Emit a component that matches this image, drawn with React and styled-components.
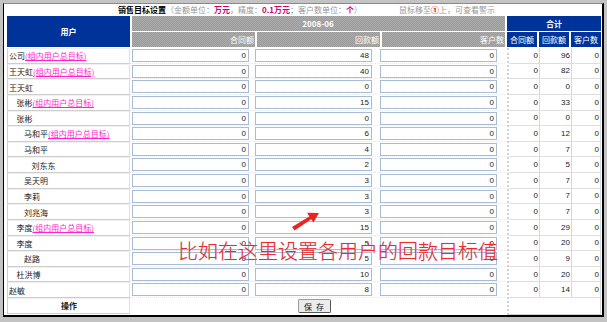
import React from 'react';
import styled, { createGlobalStyle } from 'styled-components';

const Global = createGlobalStyle`
  html, body { margin: 0; padding: 0; background: #c3c3c3; }
  body { font-family: "Noto Sans CJK SC", "Liberation Sans", sans-serif; }
  * { box-sizing: border-box; }
`;

const Frame = styled.div`
  position: relative;
  margin: 3px 0 0 3px;
  width: 601px;
  height: 314px;
  background: #fff;
  border-top: 1px solid #8a8a8a;
  border-left: 1px solid #000;
  border-right: 2px solid #000;
  border-bottom: 2px solid #000;
  overflow: hidden;
`;

const TitleBar = styled.div`
  height: 12px;
  padding-left: 114px;
  display: flex;
  align-items: center;
  font-size: 8px;
  line-height: 12px;
  color: #979797;
  white-space: nowrap;
`;

const TitleStrong = styled.b`
  color: #000;
  font-weight: 700;
`;

const Em = styled.b`
  color: #d4006f;
  font-weight: 700;
`;

const Hint = styled.span`
  margin-left: 37px;
`;

const Circled = styled.span`
  color: #e00000;
  font-weight: 700;
`;

const Body = styled.div`
  display: flex;
  padding-left: 3px;
  gap: 2px;
`;

const Main = styled.div`
  width: 498px;
`;

const HeadGrid = styled.div`
  display: grid;
  grid-template-columns: 123px 123px 123px 123px;
  grid-template-rows: 15px 15px;
  column-gap: 2px;
  row-gap: 1px;
`;

const BlueCell = styled.div`
  background: #003399;
  color: #fff;
  font-weight: ${p => p.$thin ? 400 : 700};
  font-size: 8px;
  display: flex;
  align-items: center;
  justify-content: center;
  grid-row: ${p => p.$span ? '1 / span 2' : 'auto'};
  grid-column: ${p => p.$wide ? '1 / -1' : 'auto'};
`;

const GrayCell = styled.div`
  background: #a3a3a3 repeating-conic-gradient(#999 0 25%, #adadad 0 50%) 0 0 / 2px 2px;
  color: #fff;
  font-size: 8px;
  font-weight: ${p => p.$bold ? 700 : 400};
  display: flex;
  align-items: center;
  justify-content: ${p => p.$center ? 'center' : 'flex-end'};
  padding-right: 1px;
  grid-column: ${p => p.$wide ? '2 / span 3' : 'auto'};
`;

const Spacer = styled.div`
  height: 1px;
`;

const Row = styled.div`
  display: grid;
  grid-template-columns: 123px 125px 125px 125px;
  height: 15.625px;
`;

const NameCell = styled.div`
  border-left: 1px solid #d0d0d0;
  border-right: 1px solid #e0e0e0;
  border-top: 1px solid #f0f0f0;
  border-bottom: 1px solid #cdcdcd;
  padding-left: ${p => 1 + p.$lvl * 7.5}px;
  font-size: 8px;
  color: #222;
  display: flex;
  align-items: center;
  justify-content: ${p => p.$center ? 'center' : 'flex-start'};
  font-weight: ${p => p.$bold ? 700 : 400};
  white-space: nowrap;
`;

const GroupLink = styled.span`
  color: #ff22cc;
  text-decoration: underline;
`;

const InputCell = styled.div`
  padding: 1px 0 0 ${p => p.$first ? 2 : 0}px;
  border-bottom: 1px dotted #e8e8e8;
`;

const NumInput = styled.input`
  display: block;
  width: 117px;
  height: 13px;
  border: 1px solid #a9bcd6;
  background: #fff;
  padding: 0 2px 0 0;
  margin: 0;
  text-align: right;
  font-family: "Liberation Sans", sans-serif;
  font-size: 8px;
  color: #222;
  outline: none;
`;

const OpsCell = styled.div`
  grid-column: 2 / span 3;
  display: flex;
  justify-content: center;
  align-items: flex-start;
  padding-top: 1px;
`;

const SaveButton = styled.button`
  width: 33px;
  height: 14px;
  padding: 0;
  margin-left: -7px;
  font-size: 8px;
  font-family: "Noto Sans CJK SC", sans-serif;
  background: #ececec;
  border: 1px solid #9a9a9a;
  border-right-color: #555;
  border-bottom-color: #555;
  border-radius: 2px;
  color: #111;
  letter-spacing: 4px;
  text-indent: 4px;
`;

const Totals = styled.div`
  width: 94px;
`;

const TotHead = styled.div`
  display: grid;
  grid-template-columns: 30px 30px 30px;
  grid-template-rows: 15px 15px;
  column-gap: 2px;
  row-gap: 1px;
`;

const TotBody = styled.div`
  border-left: 2px dotted #d0d0d0;
  border-right: 1px solid #d6d6d6;
  border-bottom: 1px solid #d0d0d0;
`;

const TotRow = styled.div`
  display: grid;
  grid-template-columns: 31px 32px 1fr;
  height: 15.625px;
  border-bottom: 1px solid #dedede;
`;

const TotCell = styled.div`
  font-family: "Liberation Sans", sans-serif;
  font-size: 8px;
  color: #222;
  display: flex;
  align-items: center;
  justify-content: flex-end;
  padding-right: 1px;
  border-right: ${p => p.$last ? 'none' : '1px solid #d8d8d8'};
`;

const TotEmpty = styled.div`
  height: 15.625px;
`;

const Annotation = styled.div`
  position: absolute;
  left: 174px;
  top: 236px;
  font-family: "Noto Sans CJK SC", sans-serif;
  font-size: 20px;
  line-height: 22px;
  font-weight: 300;
  color: #ee2a2a;
  white-space: nowrap;
  text-shadow: 0 0 1px rgba(150, 170, 210, 0.9);
`;

const Arrow = styled.svg`
  position: absolute;
  left: 286px;
  top: 206px;
`;

const rows = [
  { name: '公司', group: true, lvl: 0, hk: 48, tot: 96 },
  { name: '王天虹', group: true, lvl: 0, hk: 40, tot: 82 },
  { name: '王天虹', lvl: 0, hk: 0, tot: 0 },
  { name: '张彬', group: true, lvl: 1, hk: 15, tot: 33 },
  { name: '张彬', lvl: 1, hk: 0, tot: 0 },
  { name: '马和平', group: true, lvl: 2, hk: 6, tot: 12 },
  { name: '马和平', lvl: 2, hk: 4, tot: 7 },
  { name: '刘东东', lvl: 3, hk: 2, tot: 5 },
  { name: '吴天明', lvl: 2, hk: 3, tot: 7 },
  { name: '李莉', lvl: 2, hk: 3, tot: 7 },
  { name: '刘兆海', lvl: 2, hk: 3, tot: 7 },
  { name: '李度', group: true, lvl: 1, hk: 15, tot: 29 },
  { name: '李度', lvl: 1, hk: 5, tot: 20 },
  { name: '赵路', lvl: 2, hk: 5, tot: 9 },
  { name: '杜洪博', lvl: 1, hk: 10, tot: 20 },
  { name: '赵敏', lvl: 0, hk: 8, tot: 14 },
];

export default function App() {
  return (
    <>
      <Global />
      <Frame>
        <TitleBar>
          <TitleStrong>销售目标设置</TitleStrong>
          <span>（金额单位：</span><Em>万元</Em><span>，精度：</span><Em>0.1万元</Em>
          <span>；客户数单位：</span><Em>个</Em><span>）</span>
          <Hint>鼠标移至<Circled>①</Circled>上，可查看警示</Hint>
        </TitleBar>
        <Body>
          <Main>
            <HeadGrid>
              <BlueCell $span>用户</BlueCell>
              <GrayCell $wide $center $bold>2008-06</GrayCell>
              <GrayCell>合同额</GrayCell>
              <GrayCell>回款额</GrayCell>
              <GrayCell>客户数</GrayCell>
            </HeadGrid>
            <Spacer />
            {rows.map((r, i) => (
              <Row key={i}>
                <NameCell $lvl={r.lvl}>
                  {r.name}
                  {r.group && <GroupLink>(组内用户总目标)</GroupLink>}
                </NameCell>
                <InputCell $first><NumInput readOnly value="0" /></InputCell>
                <InputCell><NumInput readOnly value={String(r.hk)} /></InputCell>
                <InputCell><NumInput readOnly value="0" /></InputCell>
              </Row>
            ))}
            <Row>
              <NameCell $lvl={0} $center $bold>操作</NameCell>
              <OpsCell><SaveButton>保存</SaveButton></OpsCell>
            </Row>
          </Main>
          <Totals>
            <TotHead>
              <BlueCell $wide>合计</BlueCell>
              <BlueCell $thin>合同额</BlueCell>
              <BlueCell $thin>回款额</BlueCell>
              <BlueCell $thin>客户数</BlueCell>
            </TotHead>
            <Spacer />
            <TotBody>
              {rows.map((r, i) => (
                <TotRow key={i}>
                  <TotCell>0</TotCell>
                  <TotCell>{r.tot}</TotCell>
                  <TotCell $last>0</TotCell>
                </TotRow>
              ))}
              <TotEmpty />
            </TotBody>
          </Totals>
        </Body>
        <Arrow width="32" height="24" viewBox="0 0 32 24">
          <polygon points="2,17 19.3,6.4 17.2,2.8 29,3 23.4,12.4 21.3,9.3 4.5,20.5" fill="#ee2222" />
        </Arrow>
        <Annotation>比如在这里设置各用户的回款目标值</Annotation>
      </Frame>
    </>
  );
}
